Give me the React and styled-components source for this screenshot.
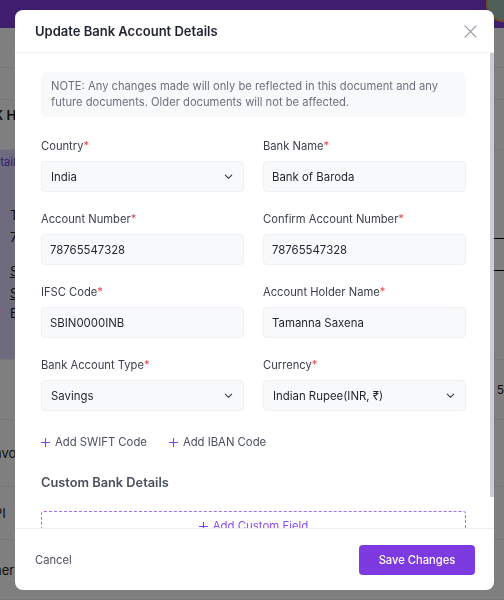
import React from 'react';
import styled, { createGlobalStyle } from 'styled-components';

const GlobalStyle = createGlobalStyle`
  html, body { margin: 0; padding: 0; }
  body {
    font-family: Inter, "Noto Sans", "Liberation Sans", sans-serif;
    background: #ffffff;
    overflow: hidden;
  }
  * { box-sizing: border-box; }
`;

/* ---------- page behind the dialog ---------- */
const Page = styled.div`
  width: 504px;
  height: 600px;
  display: flex;
  flex-direction: column;
  overflow: hidden;
`;

const TopBar = styled.div`
  height: 28px;
  background: #7f3ddb;
  flex-shrink: 0;
  display: flex;
  justify-content: flex-end;
`;

const Avatar = styled.div`
  width: 36px;
  height: 36px;
  margin-top: -14px;
  margin-right: -18px;
  border-radius: 50%;
  background: #9fbfb4;
  border: 2px solid #e0a040;
`;

const PageRow = styled.div`
  height: ${(p) => p.h}px;
  flex-shrink: 0;
  border-bottom: 1px solid #f0f0f2;
  display: flex;
  flex-direction: ${(p) => (p.row ? 'row' : 'column')};
  justify-content: ${(p) => p.justify || 'center'};
  padding: ${(p) => p.pad || '0'};
  font-size: 13px;
  color: #222;
  white-space: nowrap;
  margin-left: -6px;
`;

const DetailsCard = styled.div`
  width: 330px;
  background: #ddd6fe;
  display: flex;
  flex-direction: column;
  padding-top: 5px;
`;

const SideTable = styled.div`
  margin-left: auto;
  margin-top: 88px;
  width: 60px;
  height: 33px;
  border-top: 1px solid #000;
  border-bottom: 1px solid #000;
`;

const PageText = styled.div`
  color: ${(p) => p.color || '#222'};
  font-weight: ${(p) => p.weight || 400};
  font-size: ${(p) => p.size || 13}px;
  margin-top: ${(p) => p.mt || 0}px;
  margin-left: ${(p) => p.ml || 0}px;
  text-decoration: ${(p) => (p.underline ? 'underline' : 'none')};
`;

const Overlay = styled.div`
  position: fixed;
  inset: 0;
  background: rgba(0, 0, 0, 0.5);
`;

/* ---------- dialog ---------- */
const Modal = styled.div`
  position: fixed;
  top: 10px;
  left: 15px;
  width: 479px;
  height: 580px;
  background: #ffffff;
  border-radius: 8px;
  display: flex;
  flex-direction: column;
  overflow: hidden;
`;

const Header = styled.div`
  height: 43px;
  flex-shrink: 0;
  display: flex;
  align-items: center;
  justify-content: space-between;
  padding: 0 16px 0 20px;
  border-bottom: 1px solid #eceef2;
`;

const Title = styled.h2`
  margin: 0;
  font-size: 13px;
  font-weight: 600;
  color: #1f2430;
`;

const CloseButton = styled.button`
  border: none;
  background: none;
  padding: 0;
  width: 16px;
  height: 16px;
  display: flex;
  align-items: center;
  justify-content: center;
  cursor: pointer;
`;

const Body = styled.div`
  flex: 1;
  overflow-y: auto;
  scrollbar-width: none;
  padding: 19px 28px 16px 26px;
`;

/* scroll indicator drawn over the body's right edge */
const ScrollThumb = styled.div`
  position: absolute;
  right: 0;
  top: 43px;
  width: 4px;
  height: 444px;
  background: #c9ccd4;
`;

const Note = styled.div`
  background: #f8f9fb;
  border-radius: 6px;
  padding: 6px 10px 7px;
  font-size: 11.2px;
  line-height: 16px;
  color: #6b7080;
`;

const FormGrid = styled.div`
  display: grid;
  grid-template-columns: 1fr 1fr;
  column-gap: 19px;
  row-gap: 19px;
  margin-top: 21px;
`;

const Field = styled.div`
  display: flex;
  flex-direction: column;
  gap: 7px;
`;

const Label = styled.label`
  font-size: 11.2px;
  line-height: 16px;
  color: #3b3f4a;
  span { color: #e5484d; }
`;

const InputBox = styled.div`
  height: 31px;
  background: #f8f9fb;
  border: 1px solid #eef0f3;
  border-radius: 4px;
  display: flex;
  align-items: center;
  justify-content: space-between;
  padding: 0 9px 0 ${(p) => (p.select ? 9 : 8)}px;
  font-size: 11.4px;
  color: #1f2430;
`;

const AddRow = styled.div`
  display: flex;
  gap: 22px;
  margin-top: 24px;
`;

const AddLink = styled.button`
  border: none;
  background: none;
  padding: 0;
  font-family: inherit;
  font-size: 11.3px;
  color: #4b5060;
  display: flex;
  align-items: center;
  gap: 5px;
  cursor: pointer;
`;

const SectionTitle = styled.h3`
  margin: 26px 0 0;
  font-size: 12.8px;
  font-weight: 600;
  color: #4b5060;
`;

const DashedBox = styled.button`
  margin-top: 21px;
  width: 100%;
  height: 30px;
  border: 1px dashed #a66bf0;
  border-radius: 3px;
  background: #ffffff;
  font-family: inherit;
  font-size: 11.4px;
  color: #8b4cf0;
  display: flex;
  align-items: center;
  justify-content: center;
  gap: 5px;
`;

const Footer = styled.div`
  height: 62px;
  flex-shrink: 0;
  border-top: 1px solid #eceef2;
  display: flex;
  align-items: center;
  justify-content: space-between;
  padding: 0 19px 0 20px;
`;

const CancelButton = styled.button`
  border: none;
  background: none;
  padding: 0;
  font-family: inherit;
  font-size: 11.2px;
  color: #4b5060;
  cursor: pointer;
`;

const SaveButton = styled.button`
  width: 116px;
  height: 30px;
  border: none;
  border-radius: 4px;
  background: #7c3ae0;
  color: #ffffff;
  font-family: inherit;
  font-size: 11.2px;
  font-weight: 500;
  cursor: pointer;
`;

const Chevron = () => (
  <svg width="11" height="11" viewBox="0 0 24 24" fill="none" stroke="#2a2e38" strokeWidth="2.2" strokeLinecap="round" strokeLinejoin="round">
    <path d="M5 9l7 7 7-7" />
  </svg>
);

const CloseIcon = () => (
  <svg width="13" height="13" viewBox="0 0 14 14" fill="none" stroke="#8a8f99" strokeWidth="1.1" strokeLinecap="round">
    <path d="M1 1l12 12M13 1L1 13" />
  </svg>
);

const PlusIcon = () => (
  <svg width="9" height="9" viewBox="0 0 10 10" fill="none" stroke="#7c3aed" strokeWidth="1.2" strokeLinecap="round">
    <path d="M5 0.5v9M0.5 5h9" />
  </svg>
);

const fields = [
  { label: 'Country', value: 'India', select: true },
  { label: 'Bank Name', value: 'Bank of Baroda' },
  { label: 'Account Number', value: '78765547328' },
  { label: 'Confirm Account Number', value: '78765547328' },
  { label: 'IFSC Code', value: 'SBIN0000INB' },
  { label: 'Account Holder Name', value: 'Tamanna Saxena' },
  { label: 'Bank Account Type', value: 'Savings', select: true },
  { label: 'Currency', value: 'Indian Rupee(INR, ₹)', select: true },
];

export default function App() {
  return (
    <>
      <GlobalStyle />
      <Page>
        <TopBar><Avatar /></TopBar>
        <PageRow h={40} />
        <PageRow h={32} />
        <PageRow h={50} justify="flex-start" pad="7px 0 0 0">
          <PageText weight={600}>K HUB Traders</PageText>
        </PageRow>
        <PageRow h={210} row justify="flex-start">
          <DetailsCard>
            <PageText color="#5b3fd0" size={11}>etails</PageText>
            <PageText size={11} mt={6}>·</PageText>
            <PageText size={13} mt={18} ml={16}>Tamanna</PageText>
            <PageText size={13} mt={6} ml={16}>78765547328</PageText>
            <PageText size={13} mt={18} ml={16} underline>SBIN</PageText>
            <PageText size={13} mt={6} ml={16} underline>Savings</PageText>
            <PageText size={13} mt={4} ml={16}>Edit</PageText>
          </DetailsCard>
          <SideTable />
        </PageRow>
        <PageRow h={60} row justify="flex-end">
          <PageText size={12} mt={22}>Paid 5</PageText>
        </PageRow>
        <PageRow h={67}><PageText>nvoice</PageText></PageRow>
        <PageRow h={53}><PageText>PI</PageText></PageRow>
        <PageRow h={60}><PageText>ner</PageText></PageRow>
      </Page>
      <Overlay />
      <Modal>
        <Header>
          <Title>Update Bank Account Details</Title>
          <CloseButton aria-label="Close"><CloseIcon /></CloseButton>
        </Header>
        <Body>
          <Note>
            NOTE: Any changes made will only be reflected in this document and any future documents. Older documents will not be affected.
          </Note>
          <FormGrid>
            {fields.map((f) => (
              <Field key={f.label}>
                <Label>{f.label}<span>*</span></Label>
                <InputBox select={f.select}>
                  {f.value}
                  {f.select && <Chevron />}
                </InputBox>
              </Field>
            ))}
          </FormGrid>
          <AddRow>
            <AddLink><PlusIcon /> Add SWIFT Code</AddLink>
            <AddLink><PlusIcon /> Add IBAN Code</AddLink>
          </AddRow>
          <SectionTitle>Custom Bank Details</SectionTitle>
          <DashedBox><PlusIcon /> Add Custom Field</DashedBox>
        </Body>
        <ScrollThumb />
        <Footer>
          <CancelButton>Cancel</CancelButton>
          <SaveButton>Save Changes</SaveButton>
        </Footer>
      </Modal>
    </>
  );
}
